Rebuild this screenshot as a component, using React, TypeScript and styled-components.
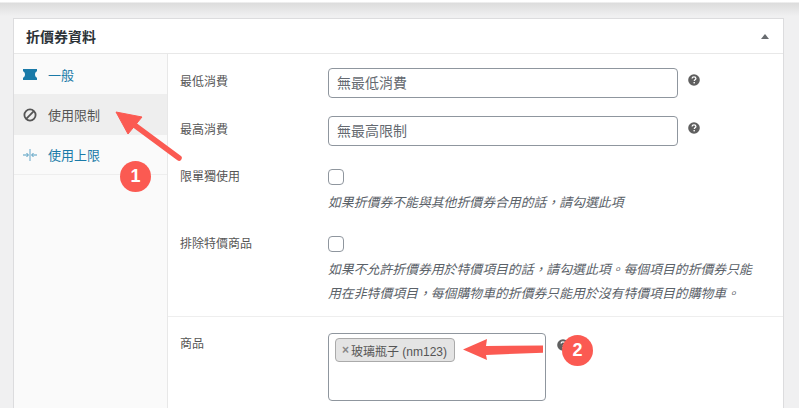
import React from 'react';
import styled, { createGlobalStyle } from 'styled-components';

const GlobalStyle = createGlobalStyle`
  html, body {
    margin: 0;
    height: 100%;
    overflow: hidden;
    background: #f0f0f1;
    font-family: "Liberation Sans", "Noto Sans CJK TC", sans-serif;
  }
`;

const HelpIcon = () => (
  <HelpWrap viewBox="0 0 12 12" width="12" height="12">
    <circle cx="6" cy="6" r="5.8" fill="#5f5f5f" />
    <path d="M4.100 4.600c0-1.100.9-1.700 1.900-1.700s1.900.6 1.900 1.600c0 1.300-1.600 1.300-1.600 2.400" fill="none" stroke="#fff" strokeWidth="1.300" />
    <rect x="5.500" y="8" width="1.400" height="1.400" fill="#fff" />
  </HelpWrap>
);

const TicketIcon = () => (
  <svg viewBox="0 0 14 11" width="14" height="11">
    <path d="M0 0h14v2.200c-1.300.6-2 1.900-2 3.300s.7 2.700 2 3.300V11H0V8.800c1.300-.6 2-1.900 2-3.300s-.7-2.700-2-3.300z" fill="#1a7aa8" />
  </svg>
);

const BlockIcon = () => (
  <svg viewBox="0 0 14 14" width="14" height="14">
    <circle cx="7" cy="7" r="5.600" fill="none" stroke="#555" strokeWidth="1.800" />
    <path d="M3.200 10.800 10.800 3.200" stroke="#555" strokeWidth="1.800" />
  </svg>
);

const LimitIcon = () => (
  <svg viewBox="0 0 14 12" width="14" height="12">
    <path d="M7 0v12" stroke="#7fb4d0" strokeWidth="1.200" />
    <path d="M0 6h5M9 6h5" stroke="#4f9bc0" strokeWidth="1.200" />
    <path d="M3.500 4 5.500 6 3.500 8M10.500 4 8.500 6 10.500 8" fill="none" stroke="#4f9bc0" strokeWidth="1" />
  </svg>
);

const App: React.FC = () => {
  return (
    <Page>
      <GlobalStyle />
      <TopShade />
      <Panel>
        <PanelHeader>
          <h2>折價券資料</h2>
          <Caret />
        </PanelHeader>
        <PanelBody>
          <Sidebar>
            <TabItem>
              <TabIcon><TicketIcon /></TabIcon>一般
            </TabItem>
            <TabItem $active>
              <TabIcon><BlockIcon /></TabIcon>使用限制
            </TabItem>
            <TabItem $last>
              <TabIcon><LimitIcon /></TabIcon>使用上限
            </TabItem>
          </Sidebar>
          <Content>
            <Section>
              <InputRow>
                <InputLabel>最低消費</InputLabel>
                <TextInput placeholder="無最低消費" readOnly />
                <HelpIcon />
              </InputRow>
              <InputRow>
                <InputLabel>最高消費</InputLabel>
                <TextInput placeholder="無最高限制" readOnly />
                <HelpIcon />
              </InputRow>
              <CheckRow>
                <CheckLabel>限單獨使用</CheckLabel>
                <CheckColumn>
                  <CheckBox />
                  <Hint>如果折價券不能與其他折價券合用的話，請勾選此項</Hint>
                </CheckColumn>
              </CheckRow>
              <CheckRow>
                <CheckLabel>排除特價商品</CheckLabel>
                <CheckColumn>
                  <CheckBox />
                  <Hint>
                    如果不允許折價券用於特價項目的話，請勾選此項。每個項目的折價券只能
                    <br />
                    用在非特價項目，每個購物車的折價券只能用於沒有特價項目的購物車。
                  </Hint>
                </CheckColumn>
              </CheckRow>
            </Section>
            <ProductRow>
              <ProductLabel>商品</ProductLabel>
              <SelectBox>
                <Chip>
                  <ChipClose>×</ChipClose>玻璃瓶子 (nm123)
                </Chip>
              </SelectBox>
              <ProductHelp>
                <HelpIcon />
              </ProductHelp>
            </ProductRow>
          </Content>
        </PanelBody>
      </Panel>

      <Overlay viewBox="0 0 799 408" width="799" height="408">
        <path d="M116 112 142 117 128 134Z" fill="#fb5a52" stroke="#fb5a52" strokeWidth="1" strokeLinejoin="round" />
        <path d="M133 124 179 158" stroke="#fb5a52" strokeWidth="5.500" strokeLinecap="round" />
        <path d="M463 349.500 487 339 486 346 543 345.500 543 352.700 486 355 487 360Z" fill="#fb5a52" />
      </Overlay>
      <Badge $left={120} $top={161}>1</Badge>
      <Badge $left={562} $top={335}>2</Badge>
    </Page>
  );
};

export default App;

const Page = styled.div`
  position: relative;
  width: 799px;
  height: 408px;
  overflow: hidden;
  padding: 18px 15px 0 13px;
  box-sizing: border-box;
  background: #f0f0f1;
`;

const TopShade = styled.div`
  position: absolute;
  top: 0;
  left: 0;
  right: 0;
  height: 16px;
  background: linear-gradient(#ffffff 0, #ffffff 2px, #dcdcdc 3px, #f0f0f1 100%);
`;

const Panel = styled.div`
  position: relative;
  height: 100%;
  box-sizing: border-box;
  background: #fff;
  border: 1px solid #dcdcde;
  border-bottom: 0;
  display: flex;
  flex-direction: column;
`;

const PanelHeader = styled.div`
  height: 34px;
  flex: none;
  display: flex;
  align-items: center;
  justify-content: space-between;
  padding: 0 14px 0 12px;
  border-bottom: 1px solid #e8e8e8;

  > h2 {
    margin: 0;
    font-size: 14px;
    font-weight: 700;
    color: #2c3338;
  }
`;

const Caret = styled.span`
  width: 0;
  height: 0;
  border-left: 4px solid transparent;
  border-right: 4px solid transparent;
  border-bottom: 5px solid #686c70;
`;

const PanelBody = styled.div`
  flex: 1;
  display: flex;
  min-height: 0;
`;

const Sidebar = styled.div`
  width: 153px;
  flex: none;
  background: #fafafa;
  border-right: 1px solid #e8e8e8;
`;

const TabItem = styled.div<{ $active?: boolean; $last?: boolean }>`
  height: ${p => (p.$active ? '41px' : '40px')};
  box-sizing: border-box;
  display: flex;
  align-items: center;
  padding-left: 9px;
  font-size: 13px;
  color: ${p => (p.$active ? '#555' : '#1a7aa8')};
  background: ${p => (p.$active ? '#eeeeee' : 'transparent')};
  border-bottom: ${p => (p.$last ? '1px solid #eeeeee' : '0')};
`;

const TabIcon = styled.span`
  width: 25px;
  flex: none;
  display: flex;
  align-items: center;
`;

const Content = styled.div`
  flex: 1;
  min-width: 0;
`;

const Section = styled.div`
  height: 263px;
  box-sizing: border-box;
  padding-top: 14px;
  border-bottom: 1px solid #eeeeee;
`;

const InputRow = styled.div`
  display: flex;
  align-items: center;
  height: 30px;
  margin-bottom: 18px;
  padding-left: 12px;
`;

const FieldLabel = styled.div`
  width: 148px;
  flex: none;
  font-size: 12px;
  line-height: 18px;
  color: #555;
`;

const InputLabel = styled(FieldLabel)`
  margin-bottom: 3px;
`;

const CheckLabel = styled(FieldLabel)`
  padding-top: 4px;
`;

const TextInput = styled.input`
  width: 350px;
  height: 30px;
  box-sizing: border-box;
  border: 1px solid #8f969e;
  border-radius: 4px;
  padding: 0 8px;
  font-family: inherit;
  font-size: 14px;
  outline: none;
  margin-right: 10px;

  &::placeholder {
    color: #646970;
    opacity: 1;
  }
`;

const HelpWrap = styled.svg`
  flex: none;
  margin-bottom: 6px;
`;

const CheckRow = styled.div`
  display: flex;
  padding-left: 12px;
  margin-bottom: 16px;
`;

const CheckColumn = styled.div`
  display: flex;
  flex-direction: column;
`;

const CheckBox = styled.span`
  width: 16px;
  height: 16px;
  box-sizing: border-box;
  border: 1px solid #8f969e;
  border-radius: 4px;
  background: #fff;
  margin: 5px 0 6px;
`;

const Hint = styled.p`
  margin: 0;
  font-size: 12.850px;
  line-height: 24px;
  font-style: italic;
  color: #5a6168;
`;

const ProductRow = styled.div`
  display: flex;
  align-items: flex-start;
  padding: 16px 0 0 12px;
`;

const ProductLabel = styled(FieldLabel)`
  padding-top: 2px;
`;

const SelectBox = styled.div`
  width: 218px;
  height: 68px;
  box-sizing: border-box;
  border: 1px solid #8f969e;
  border-radius: 4px;
  background: #fff;
  padding: 4px 6px;
`;

const Chip = styled.div`
  display: inline-flex;
  align-items: center;
  width: 120px;
  height: 24px;
  box-sizing: border-box;
  padding-left: 6px;
  border: 1px solid #aaa;
  border-radius: 4px;
  background: #e4e4e4;
  font-size: 12px;
  color: #555;
  white-space: nowrap;
`;

const ChipClose = styled.span`
  color: #888;
  font-weight: 700;
  margin-right: 2px;
`;

const ProductHelp = styled.div`
  margin: 6px 0 0 11px;
`;

const Overlay = styled.svg`
  position: absolute;
  left: 0;
  top: 0;
  pointer-events: none;
`;

const Badge = styled.div<{ $left: number; $top: number }>`
  position: absolute;
  left: ${p => p.$left}px;
  top: ${p => p.$top}px;
  width: 31px;
  height: 31px;
  border-radius: 50%;
  background: #fb5a52;
  color: #fff;
  font-size: 18px;
  font-weight: 700;
  display: flex;
  align-items: center;
  justify-content: center;
`;
